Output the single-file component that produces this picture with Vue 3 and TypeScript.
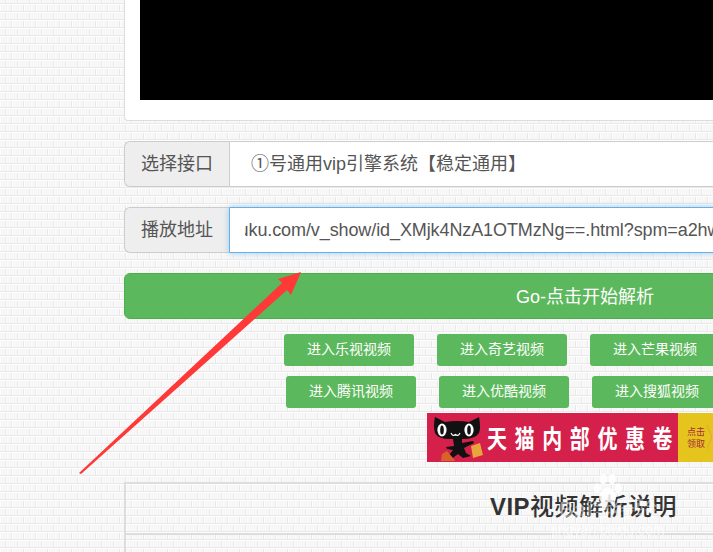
<script setup lang="ts">
const rowOne: string[] = ['进入乐视视频', '进入奇艺视频', '进入芒果视频']
const rowTwo: string[] = ['进入腾讯视频', '进入优酷视频', '进入搜狐视频']
</script>

<template>
  <div class="page">
    <main class="content">
      <section class="player-card"><div class="player"></div></section>

      <div class="field">
        <span class="addon">选择接口</span>
        <div class="control">①号通用vip引擎系统【稳定通用】</div>
      </div>
      <div class="field">
        <span class="addon">播放地址</span>
        <div class="control focused">
          <div class="url-clip"><span class="url">http://v.youku.com/v_show/id_XMjk4NzA1OTMzNg==.html?spm=a2hww.20027244</span></div>
        </div>
      </div>

      <button class="go">Go-点击开始解析</button>

      <div class="links first">
        <a v-for="t in rowOne" :key="t" class="link">{{ t }}</a>
      </div>
      <div class="links second">
        <a v-for="t in rowTwo" :key="t" class="link">{{ t }}</a>
      </div>

      <div class="banner">
        <svg class="cat" viewBox="0 0 50 46" width="50" height="46">
          <path d="M20 23 L29 23 L29 27 L40 25 L41 27 L31 32 L33 37 L38 40 L30 42 L25 38 L17 44 L13 43 L20 34 L14 33 L13 31 L21 30 Z" fill="#111" />
          <path d="M2 1 L12 6 Q24 4 36 6 L46 1 Q48 12 46 17 Q42 23 30 23 L17 23 Q5 23 2 17 Q0 10 2 1 Z" fill="#111" />
          <ellipse cx="9" cy="14" rx="4.6" ry="6.5" fill="#fff" />
          <ellipse cx="36" cy="14" rx="4.6" ry="6.5" fill="#fff" />
          <ellipse cx="9" cy="14" rx="1.8" ry="4.6" fill="#111" />
          <ellipse cx="36" cy="14" rx="1.8" ry="4.6" fill="#111" />
          <path d="M18 17 Q20 21 22.5 18.5 Q25 21 27 17" fill="none" stroke="#fff" stroke-width="1.2" />
          <path d="M38 30 L47 27 L50 39 L40 42 Z" fill="#e8a53c" />
          <path d="M9 38 L14 35 L20 42 L22 45 L8 45 Z" fill="#d9622b" />
        </svg>
        <span class="banner-title">天猫内部优惠卷</span>
        <span class="banner-side">
          点击<br />领取
          <svg class="chevron" viewBox="0 0 6 24" width="6" height="24">
            <polyline points="0,0 5,12 0,24" fill="none" stroke="#e8a040" stroke-width="1" />
          </svg>
        </span>
      </div>

      <section class="notes">
        <h2 class="notes-title"><b>VIP</b>视频解析说明</h2>
      </section>
    </main>

    <svg class="arrow" viewBox="0 0 713 552" width="713" height="552">
      <polygon points="79,473 282,283 278,279 301,272 291,295 287,290 81,474" fill="#ff3838" />
    </svg>

    <div class="watermark">
      <svg viewBox="10 2 44 44" width="34" height="30">
        <g fill="#fff" fill-opacity="0.85">
          <ellipse cx="16" cy="24" rx="5" ry="7" />
          <ellipse cx="25" cy="11" rx="5" ry="8" />
          <ellipse cx="38" cy="11" rx="5" ry="8" />
          <ellipse cx="47" cy="24" rx="5" ry="7" />
          <path d="M31 22 Q40 24 44 37 Q44 46 36 44 L27 44 Q19 46 19 37 Q23 24 31 22 Z" />
        </g>
      </svg>
      <span class="wm-name">Bai度经验</span>
      <span class="wm-url">jingyan.baidu.com</span>
    </div>
  </div>
</template>

<style>
html, body { margin: 0; overflow: hidden; }
</style>

<style scoped>
.page {
  position: relative;
  width: 713px;
  height: 552px;
  overflow: hidden;
  font-family: "Liberation Sans", "Noto Sans CJK SC", sans-serif;
  background-color: #f7f7f7;
  background-image:
    linear-gradient(#e9e9e9 1px, #fdfdfd 1px, #fdfdfd 2px, transparent 2px),
    conic-gradient(at 1px 8px, transparent 0 270deg, #e9e9e9 270deg 360deg),
    conic-gradient(at 1px 8px, transparent 0 270deg, #e9e9e9 270deg 360deg),
    conic-gradient(at 1px 8px, transparent 0 270deg, #fdfdfd 270deg 360deg),
    conic-gradient(at 1px 8px, transparent 0 270deg, #fdfdfd 270deg 360deg);
  background-size: 12px 8px, 12px 16px, 12px 16px, 12px 16px, 12px 16px;
  background-position: 0 3px, 11px 3px, 5px 11px, 12px 3px, 6px 11px;
}
.content {
  width: 922px;
  margin-left: 124px;
}
.player-card {
  box-sizing: border-box;
  height: 121px;
  padding: 0 15px 20px;
  background: #fff;
  border: 1px solid #ddd;
  border-top: 0;
  border-radius: 0 0 4px 4px;
}
.player { height: 100px; background: #000; }
.field {
  display: flex;
  height: 46px;
  margin-top: 20px;
  color: #555;
}
.addon {
  box-sizing: border-box;
  width: 105px;
  line-height: 44px;
  text-align: center;
  font-size: 18px;
  background: #eee;
  border: 1px solid #ccc;
  border-right: 0;
  border-radius: 6px 0 0 6px;
}
.control {
  box-sizing: border-box;
  flex: 1;
  min-width: 0;
  padding-left: 21px;
  line-height: 44px;
  font-size: 18px;
  white-space: nowrap;
  background: #fff;
  border: 1px solid #ccc;
  border-radius: 0 6px 6px 0;
  overflow: hidden;
}
.focused {
  border-color: #66afe9;
  box-shadow: 0 0 6px rgba(102, 175, 233, 0.6);
  padding-left: 15px;
}
.url-clip { overflow: hidden; }
.url { margin-left: -82px; letter-spacing: -0.1px; }
.go {
  display: block;
  box-sizing: border-box;
  width: 100%;
  height: 46px;
  margin-top: 20px;
  padding: 0 0 3px;
  font: inherit;
  font-size: 18px;
  color: #fff;
  background: #5cb85c;
  border: 1px solid #4cae4c;
  border-radius: 6px;
}
.links { display: flex; gap: 23px; }
.first { margin-top: 15px; padding-left: 160px; }
.second { margin-top: 10px; padding-left: 162px; }
.link {
  width: 130px;
  height: 32px;
  line-height: 30px;
  text-align: center;
  font-size: 14px;
  color: #fff;
  background: #5cb85c;
  border-radius: 3px;
}
.banner {
  display: flex;
  align-items: center;
  width: 286px;
  height: 49px;
  margin: 5px 0 0 303px;
  background: #d4204a;
  position: relative;
}
.cat { flex: none; margin: 2px 0 0 6px; }
.banner-title {
  display: inline-block;
  margin-left: 4px;
  font-size: 20px;
  font-weight: 700;
  letter-spacing: 7.6px;
  color: #fff;
  white-space: nowrap;
  transform: scaleY(1.25);
}
.banner-side {
  position: absolute;
  right: 0;
  top: 0;
  box-sizing: border-box;
  width: 35px;
  height: 49px;
  padding: 13px 0 0 9px;
  font-size: 9px;
  line-height: 12px;
  color: #a8283c;
  background: #e6c41e;
  overflow: hidden;
}
.chevron { position: absolute; right: 0; top: 12px; }
.notes {
  box-sizing: border-box;
  height: 120px;
  margin-top: 20px;
  border: 2px solid #ddd;
  border-right: 0;
}
.notes-title {
  box-sizing: border-box;
  margin: 0;
  height: 51px;
  padding-right: 5px;
  line-height: 46px;
  text-align: center;
  font-size: 24px;
  font-weight: 500;
  letter-spacing: 0.5px;
  color: #333;
  border-bottom: 2px solid #ddd;
}
.arrow { position: absolute; left: 0; top: 0; pointer-events: none; }
.watermark {
  position: absolute;
  left: 540px;
  top: 473px;
  width: 136px;
  text-align: center;
  color: #fff;
  pointer-events: none;
}
.watermark svg { display: block; margin: 0 auto; }
.wm-name { display: block; margin-top: -5px; font-size: 22px; line-height: 24px; opacity: 0.45; }
.wm-url { display: block; font-size: 14px; line-height: 16px; opacity: 0.7; }
</style>
